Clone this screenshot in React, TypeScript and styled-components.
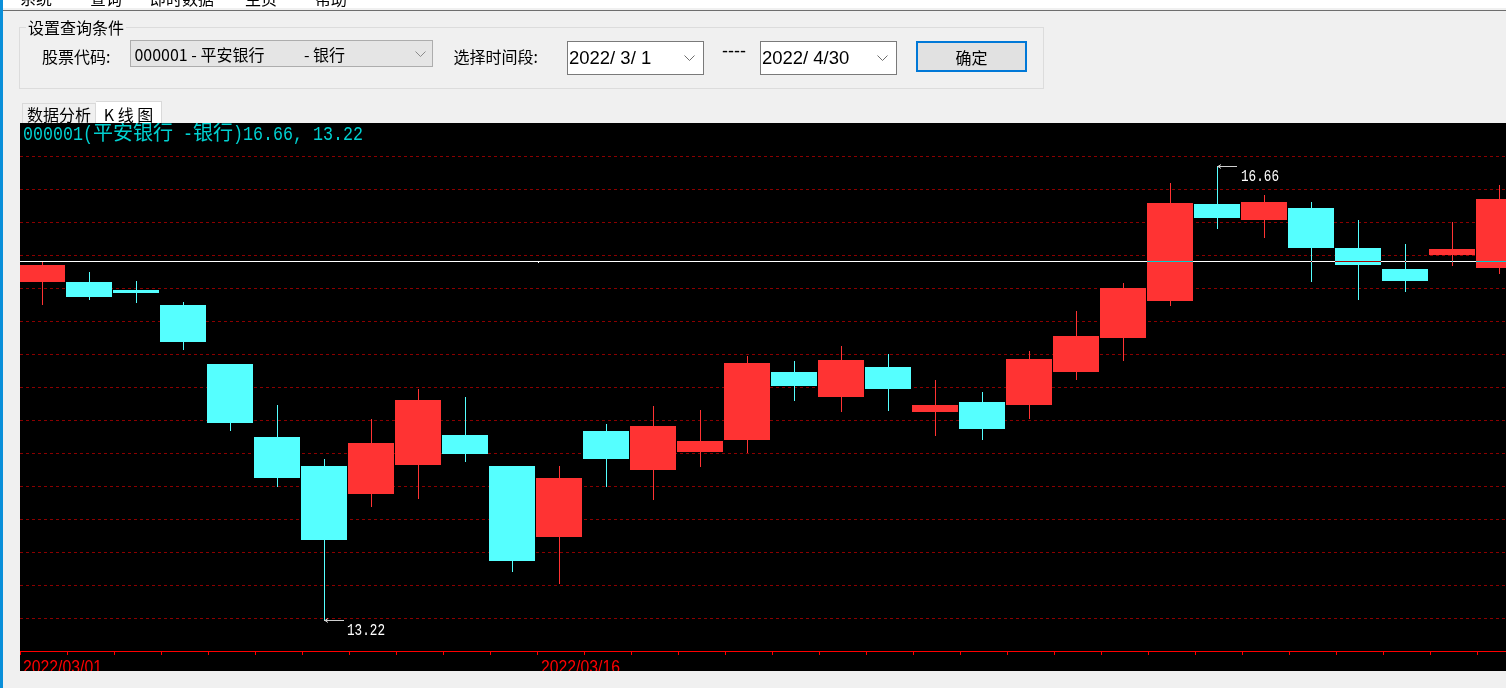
import React from "react";
import styled, { createGlobalStyle } from "styled-components";

const GlobalStyle = createGlobalStyle`
  html, body { margin: 0; padding: 0; background: #f0f0f0; }
  body { font-family: "Noto Sans CJK SC", "Noto Sans", sans-serif; overflow: hidden; }
  #root { width: 1506px; height: 688px; }
`;

const Frame = styled.div`
  display: flex;
  width: 1506px;
  height: 688px;
  background: #f0f0f0;
  overflow: hidden;
`;

const WindowEdge = styled.div`
  flex: none;
  width: 3px;
  background: #0a8fd9;
`;

const Main = styled.div`
  flex: 1;
  min-width: 0;
  display: flex;
  flex-direction: column;
`;

const MenuBar = styled.div`
  flex: none;
  height: 8px;
  background: #ffffff;
  display: flex;
  align-items: flex-end;
  overflow: hidden;
  padding-left: 17px;
`;

const MenuItem = styled.span<{ $gap: number }>`
  flex: none;
  font-size: 16px;
  line-height: 20px;
  color: #000;
  white-space: nowrap;
  margin-right: ${(p) => p.$gap}px;
`;

const Rule = styled.div`
  flex: none;
  margin-top: 2px;
  height: 1px;
  background: #6e6e6e;
`;

const GroupBox = styled.fieldset`
  flex: none;
  margin: 6px 0 0 16px;
  padding: 0;
  width: 1025px;
  height: 72px;
  box-sizing: border-box;
  border: 1px solid #dcdcdc;
  min-width: 0;
`;

const GroupTitle = styled.legend`
  margin-left: 6px;
  padding: 0 2px;
  font-size: 16px;
  line-height: 20px;
  color: #000;
`;

const QueryRow = styled.div`
  display: flex;
  align-items: flex-start;
  padding: 3px 0 0 21px;
`;

const FieldLabel = styled.span<{ $ml: number }>`
  flex: none;
  margin-left: ${(p) => p.$ml}px;
  margin-top: 6px;
  font-size: 16px;
  line-height: 20px;
  color: #000;
  white-space: nowrap;
`;

const Combo = styled.div<{ $ml: number }>`
  flex: none;
  margin-left: ${(p) => p.$ml}px;
  width: 303px;
  height: 27px;
  box-sizing: border-box;
  border: 1px solid #adadad;
  background: #e5e5e5;
  display: flex;
  align-items: center;
  justify-content: space-between;
  padding: 0 6px 0 3px;
  font-size: 16px;
  line-height: 20px;
  color: #000;
`;

const ComboText = styled.span`
  white-space: pre;
`;

const DateBox = styled.div<{ $ml: number }>`
  flex: none;
  margin-left: ${(p) => p.$ml}px;
  margin-top: 1px;
  width: 137px;
  height: 34px;
  box-sizing: border-box;
  border: 1px solid #7a7a7a;
  background: #ffffff;
  display: flex;
  align-items: center;
  justify-content: space-between;
  padding: 0 8px 0 1px;
`;

const DateText = styled.span`
  font-family: "Liberation Sans", Arial, sans-serif;
  font-size: 18.5px;
  line-height: 20px;
  color: #000;
  white-space: pre;
`;

const RangeDash = styled.span<{ $ml: number }>`
  flex: none;
  margin-left: ${(p) => p.$ml}px;
  margin-top: 1px;
  font-family: "Liberation Sans", Arial, sans-serif;
  font-size: 18px;
  line-height: 20px;
  color: #000;
`;

const ConfirmButton = styled.button<{ $ml: number }>`
  flex: none;
  margin-left: ${(p) => p.$ml}px;
  margin-top: 1px;
  width: 111px;
  height: 31px;
  box-sizing: border-box;
  border: 2px solid #0078d7;
  background: #e1e1e1;
  font-family: "Noto Sans CJK SC", "Noto Sans", sans-serif;
  font-size: 16px;
  line-height: 20px;
  color: #000;
  padding: 0;
`;

const Chevron = styled.svg`
  flex: none;
  display: block;
`;

const TabStrip = styled.div`
  flex: none;
  margin-top: 12px;
  height: 22px;
  display: flex;
  align-items: flex-end;
  padding-left: 19px;
`;

const Tab = styled.div<{ $active?: boolean; $w: number }>`
  flex: none;
  box-sizing: border-box;
  width: ${(p) => p.$w}px;
  height: ${(p) => (p.$active ? 22 : 20)}px;
  padding-top: ${(p) => (p.$active ? 4 : 2)}px;
  border: 1px solid #d9d9d9;
  border-bottom: none;
  border-left: ${(p) => (p.$active ? "none" : "1px solid #d9d9d9")};
  background: ${(p) => (p.$active ? "#ffffff" : "#f0f0f0")};
  text-align: center;
  font-size: 16px;
  line-height: 17px;
  color: #000;
  white-space: pre;
`;

const ChartPanel = styled.div`
  flex: none;
  margin-left: 17px;
  width: 1486px;
  height: 548px;
  background: #000;
  overflow: hidden;
`;

const ChartSvg = styled.svg`
  display: block;
`;

type Candle = [number, number, number, number, boolean];

const candles: Candle[] = [
  [265, 282, 262, 305, true],
  [282, 297, 272, 300, false],
  [290, 293, 281, 303, false],
  [305, 342, 302, 350, false],
  [364, 423, 364, 431, false],
  [437, 478, 405, 487, false],
  [466, 540, 459, 621, false],
  [443, 494, 419, 507, true],
  [400, 465, 389, 499, true],
  [435, 454, 397, 462, false],
  [466, 561, 466, 572, false],
  [478, 537, 466, 584, true],
  [431, 459, 424, 487, false],
  [426, 470, 406, 500, true],
  [441, 452, 410, 467, true],
  [363, 440, 356, 453, true],
  [372, 386, 361, 401, false],
  [360, 397, 346, 412, true],
  [367, 389, 354, 411, false],
  [405, 412, 380, 436, true],
  [402, 429, 392, 440, false],
  [359, 405, 351, 419, true],
  [336, 372, 311, 380, true],
  [288, 338, 283, 361, true],
  [203, 301, 183, 306, true],
  [204, 218, 167, 229, false],
  [202, 220, 195, 238, true],
  [208, 248, 202, 282, false],
  [248, 265, 220, 300, false],
  [269, 281, 244, 292, false],
  [249, 255, 222, 266, true],
  [199, 268, 185, 274, true],
];

const RED = "#ff3333";
const CYAN = "#55ffff";
const MONO = '"Liberation Mono", "DejaVu Sans Mono", monospace';
const CJK = '"Noto Sans CJK SC", sans-serif';

const gridYs = Array.from({ length: 15 }, (_, k) => 156 + 33 * k);
const ticks = Array.from({ length: 32 }, (_, k) => 20 + 47 * k);

function ChevronIcon({ color }: { color: string }) {
  return (
    <Chevron width="11" height="6" viewBox="0 0 11 6">
      <polyline points="0.5,0.5 5.5,5.5 10.5,0.5" fill="none" stroke={color} strokeWidth="1" />
    </Chevron>
  );
}

function PriceMark({ x, y, lx, ly, text }: { x: number; y: number; lx: number; ly: number; text: string }) {
  return (
    <g>
      <line x1={x} y1={y + 0.5} x2={x + 20} y2={y + 0.5} stroke="#d0d0d0" strokeWidth="1" />
      <polyline points={`${x + 4},${y - 1.5} ${x + 1},${y + 0.5} ${x + 4},${y + 2.5}`} fill="none" stroke="#d0d0d0" strokeWidth="1" />
      <text x={lx} y={ly} fill="#ffffff" fontFamily={MONO} fontSize="17" textLength="38" lengthAdjust="spacingAndGlyphs">
        {text}
      </text>
    </g>
  );
}

function KLineChart() {
  return (
    <ChartPanel>
      <ChartSvg width="1486" height="548" viewBox="0 0 1486 548">
        <g transform="translate(-20 -123)" shapeRendering="crispEdges">
          {gridYs.map((y) => (
            <line key={y} x1="20" y1={y + 0.5} x2="1506" y2={y + 0.5} stroke="#8b0000" strokeWidth="1" strokeDasharray="3 3" />
          ))}
          {candles.map(([bt, bb, wt, wb, up], i) => {
            const c = 42 + 47 * i;
            const col = up ? RED : CYAN;
            return (
              <g key={i}>
                <rect x={c} y={wt} width="1" height={wb - wt} fill={col} />
                <rect x={c - 23} y={bt} width="46" height={Math.max(bb - bt, 1)} fill={col} />
              </g>
            );
          })}
          <rect x="20" y="261" width="1486" height="1" fill="#ffffff" style={{ mixBlendMode: "difference" }} />
          <rect x="538" y="262" width="1" height="1" fill="#ffffff" />
          <rect x="20" y="651" width="1486" height="1" fill="#ff0000" />
          {ticks.map((x) => (
            <rect key={x} x={x} y="652" width="1" height="3" fill="#ff0000" />
          ))}
        </g>
        <g transform="translate(-20 -123)">
          <PriceMark x={1217} y={166} lx={1241} ly={181} text="16.66" />
          <PriceMark x={324} y={620} lx={347} ly={635} text="13.22" />
          <text y="140" fill="#00d0d0" fontSize="20">
            <tspan x="23" fontFamily={MONO} textLength="70" lengthAdjust="spacingAndGlyphs">000001(</tspan>
            <tspan x="93" fontFamily={CJK} textLength="80" lengthAdjust="spacingAndGlyphs">平安银行</tspan>
            <tspan x="183" fontFamily={MONO} textLength="10" lengthAdjust="spacingAndGlyphs">-</tspan>
            <tspan x="193" fontFamily={CJK} textLength="40" lengthAdjust="spacingAndGlyphs">银行</tspan>
            <tspan x="233" fontFamily={MONO} textLength="70" lengthAdjust="spacingAndGlyphs">)16.66,</tspan>
            <tspan x="313" fontFamily={MONO} textLength="50" lengthAdjust="spacingAndGlyphs">13.22</tspan>
          </text>
          <text x="23" y="673" fill="#ff0000" fontFamily={'"Liberation Sans", sans-serif'} fontSize="19" textLength="79" lengthAdjust="spacingAndGlyphs">
            2022/03/01
          </text>
          <text x="541" y="673" fill="#ff0000" fontFamily={'"Liberation Sans", sans-serif'} fontSize="19" textLength="79" lengthAdjust="spacingAndGlyphs">
            2022/03/16
          </text>
        </g>
      </ChartSvg>
    </ChartPanel>
  );
}

export default function App() {
  return (
    <>
      <GlobalStyle />
      <Frame>
        <WindowEdge />
        <Main>
          <MenuBar>
            <MenuItem $gap={38}>系统</MenuItem>
            <MenuItem $gap={28}>查询</MenuItem>
            <MenuItem $gap={31}>即时数据</MenuItem>
            <MenuItem $gap={38}>主页</MenuItem>
            <MenuItem $gap={0}>帮助</MenuItem>
          </MenuBar>
          <Rule />
          <GroupBox>
            <GroupTitle>设置查询条件</GroupTitle>
            <QueryRow>
              <FieldLabel $ml={1}>股票代码:</FieldLabel>
              <Combo $ml={20}>
                <ComboText>{"000001 - 平安银行           - 银行"}</ComboText>
                <ChevronIcon color="#8a8a8a" />
              </Combo>
              <FieldLabel $ml={20}>选择时间段:</FieldLabel>
              <DateBox $ml={29}>
                <DateText>{"2022/ 3/ 1"}</DateText>
                <ChevronIcon color="#6d6d6d" />
              </DateBox>
              <RangeDash $ml={18}>----</RangeDash>
              <DateBox $ml={14}>
                <DateText>{"2022/ 4/30"}</DateText>
                <ChevronIcon color="#6d6d6d" />
              </DateBox>
              <ConfirmButton $ml={19}>确定</ConfirmButton>
            </QueryRow>
          </GroupBox>
          <TabStrip>
            <Tab $w={74}>数据分析</Tab>
            <Tab $active $w={66}>{"K 线 图"}</Tab>
          </TabStrip>
          <KLineChart />
        </Main>
      </Frame>
    </>
  );
}
